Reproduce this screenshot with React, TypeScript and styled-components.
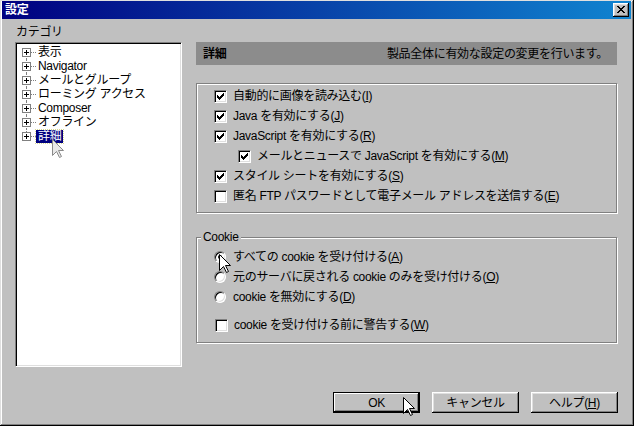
import styled, { createGlobalStyle } from 'styled-components'

const GlobalStyle = createGlobalStyle`
  html, body {
    margin: 0;
    padding: 0;
    background: #c0c0c0;
  }
  body {
    font-family: "Liberation Sans", "Noto Sans CJK JP", sans-serif;
    font-size: 12px;
    letter-spacing: -0.3px;
    color: #000;
  }
`

const Window = styled.div`
  position: relative;
  width: 634px;
  height: 426px;
  box-sizing: border-box;
  background: #c0c0c0;
  padding: 1px 3px 3px 2px;
  box-shadow: inset -1px -1px #000, inset 1px 1px #dfdfdf, inset -2px -2px #808080,
    inset 2px 2px #fff;
  display: flex;
  flex-direction: column;
`

const TitleBar = styled.div`
  height: 18px;
  flex: none;
  display: flex;
  align-items: center;
  justify-content: space-between;
  padding: 0 2px 0 3px;
  background: linear-gradient(90deg, #000080, #1084d0);
  color: #fff;
  font-weight: bold;
  line-height: 18px;
`

const CloseButton = styled.div`
  width: 16px;
  height: 14px;
  box-sizing: border-box;
  background: #c0c0c0;
  box-shadow: inset -1px -1px #000, inset 1px 1px #fff, inset -2px -2px #808080,
    inset 2px 2px #dfdfdf;
  display: flex;
  align-items: center;
  justify-content: center;
  padding: 0 1px 1px 0;
`

const Body = styled.div`
  flex: 1;
  display: flex;
  flex-direction: column;
  padding: 5px 13px 0 13px;
`

const Columns = styled.div`
  display: flex;
  gap: 14px;
  height: 343px;
`

const LeftColumn = styled.div`
  width: 167px;
  flex: none;
  display: flex;
  flex-direction: column;
`

const CategoryLabel = styled.div`
  height: 16px;
  line-height: 16px;
  margin-bottom: 2px;
  padding-left: 1px;
`

const Tree = styled.div`
  height: 325px;
  box-sizing: border-box;
  background: #fff;
  border: 1px solid;
  border-color: #808080 #fff #fff #808080;
  box-shadow: inset 1px 1px #000, inset -1px -1px #dfdfdf;
  padding: 2px 0 0 6px;
`

const TreeRow = styled.div<{ $first?: boolean; $last?: boolean }>`
  position: relative;
  height: 14px;
  display: flex;
  align-items: center;

  &::before {
    content: '';
    position: absolute;
    left: 4px;
    top: ${(p) => (p.$first ? '7px' : '0')};
    bottom: ${(p) => (p.$last ? '7px' : '0')};
    border-left: 1px dotted #808080;
  }
`

const Expander = styled.span`
  position: relative;
  z-index: 1;
  width: 9px;
  height: 9px;
  box-sizing: border-box;
  border: 1px solid #808080;
  background: #fff;
  flex: none;

  &::before {
    content: '';
    position: absolute;
    left: 1px;
    top: 3px;
    width: 5px;
    height: 1px;
    background: #000;
  }
  &::after {
    content: '';
    position: absolute;
    left: 3px;
    top: 1px;
    width: 1px;
    height: 5px;
    background: #000;
  }
`

const Connector = styled.span`
  width: 5px;
  flex: none;
  border-top: 1px dotted #808080;
`

const TreeLabel = styled.span<{ $selected?: boolean }>`
  display: inline-block;
  height: 13px;
  padding: 0 2px;
  line-height: 13px;
  white-space: nowrap;
  background: ${(p) => (p.$selected ? '#000080' : 'transparent')};
  color: ${(p) => (p.$selected ? '#fff' : '#000')};
  outline: ${(p) => (p.$selected ? '1px dotted #d8d890' : 'none')};
`

const RightColumn = styled.div`
  flex: 1;
  display: flex;
  flex-direction: column;
  padding-top: 18px;
`

const Header = styled.div`
  height: 23px;
  margin-right: 1px;
  flex: none;
  background: #8c8c8c;
  display: flex;
  align-items: center;
  justify-content: space-between;
  padding: 0 9px 0 7px;
  line-height: 14px;
`

const HeaderTitle = styled.span`
  font-weight: bold;
`

const Group = styled.fieldset<{ $gap: number }>`
  margin: ${(p) => p.$gap}px 1px 0 0;
  padding: 2px 0 6px 0;
  border: 1px solid #808080;
  box-shadow: inset 1px 1px #fff, 1px 1px 0 #fff;
  min-width: 0;
`

const Legend = styled.legend`
  margin-left: 4px;
  padding: 0 2px;
  line-height: 14px;
  background: #c0c0c0;
`

const OptionList = styled.div<{ $top: number; $bottom: number }>`
  display: flex;
  flex-direction: column;
  padding: ${(p) => p.$top}px 0 ${(p) => p.$bottom}px 17px;
`

const OptionRow = styled.div<{ $indent?: number; $space?: number }>`
  height: 20px;
  display: flex;
  align-items: center;
  gap: 6px;
  margin-left: ${(p) => p.$indent ?? 0}px;
  margin-top: ${(p) => p.$space ?? 0}px;
  line-height: 14px;
  white-space: nowrap;
`

const CheckBox = styled.span`
  width: 13px;
  height: 13px;
  box-sizing: border-box;
  flex: none;
  background: #fff;
  border: 1px solid;
  border-color: #808080 #fff #fff #808080;
  box-shadow: inset 1px 1px #000, inset -1px -1px #dfdfdf;
  display: flex;
  align-items: center;
  justify-content: center;
`

const RadioBox = styled.span<{ $on?: boolean }>`
  position: relative;
  width: 12px;
  height: 12px;
  box-sizing: border-box;
  flex: none;
  border-radius: 50%;
  background: #fff;
  border: 1px solid;
  border-color: #808080 #fff #fff #808080;
  box-shadow: inset 1px 1px #000, inset -1px -1px #dfdfdf;
  margin-right: 1px;

  &::after {
    content: '';
    display: ${(p) => (p.$on ? 'block' : 'none')};
    position: absolute;
    left: 3px;
    top: 3px;
    width: 4px;
    height: 4px;
    border-radius: 50%;
    background: #000;
  }
`

const Footer = styled.div`
  display: flex;
  justify-content: flex-end;
  gap: 12px;
  margin-top: 25px;
`

const Button = styled.div<{ $default?: boolean }>`
  width: 87px;
  height: 21px;
  box-sizing: border-box;
  background: #c0c0c0;
  display: flex;
  align-items: center;
  justify-content: center;
  line-height: 14px;
  box-shadow: ${(p) =>
    p.$default
      ? 'inset 0 0 0 1px #000, inset -2px -2px #000, inset 2px 2px #fff, inset -3px -3px #808080'
      : 'inset -1px -1px #000, inset 1px 1px #fff, inset -2px -2px #808080, inset 2px 2px #dfdfdf'};
`

const Pointer = styled.svg<{ $x: number; $y: number }>`
  position: absolute;
  left: ${(p) => p.$x}px;
  top: ${(p) => p.$y}px;
  z-index: 5;
`

const Check = () => (
  <svg width="7" height="7" viewBox="0 0 7 7">
    <path
      d="M0 2h1v3H0zM1 3h1v3H1zM2 4h1v3H2zM3 3h1v3H3zM4 2h1v3H4zM5 1h1v3H5zM6 0h1v3H6z"
      fill="#000"
    />
  </svg>
)

const CloseGlyph = () => (
  <svg width="8" height="7" viewBox="0 0 8 7">
    <path
      d="M0 0h2v1H0zM6 0h2v1H6zM1 1h2v1H1zM5 1h2v1H5zM2 2h4v1H2zM3 3h2v1H3zM2 4h4v1H2zM1 5h2v1H1zM5 5h2v1H5zM0 6h2v1H0zM6 6h2v1H6z"
      fill="#000"
    />
  </svg>
)

const Cursor = ({ x, y, ghost }: { x: number; y: number; ghost?: boolean }) => (
  <Pointer $x={x} $y={y} width="13" height="20" viewBox="0 0 13 20">
    <path
      d="M0.5 0.5V16.5L4.5 12.5L7.5 18.5L9.5 17.5L6.5 11.5H11.5Z"
      fill={ghost ? '#e8e8e8' : '#fff'}
      stroke={ghost ? '#8a8a8a' : '#000'}
      strokeWidth="1"
    />
  </Pointer>
)

const Key = ({ label, k }: { label: string; k: string }) => (
  <span>
    {label}(<u>{k}</u>)
  </span>
)

const categories = ['表示', 'Navigator', 'メールとグループ', 'ローミング アクセス', 'Composer', 'オフライン', '詳細']

const options = [
  { label: '自動的に画像を読み込む', k: 'I', checked: true, indent: 0 },
  { label: 'Java を有効にする', k: 'J', checked: true, indent: 0 },
  { label: 'JavaScript を有効にする', k: 'R', checked: true, indent: 0 },
  { label: 'メールとニュースで JavaScript を有効にする', k: 'M', checked: true, indent: 24 },
  { label: 'スタイル シートを有効にする', k: 'S', checked: true, indent: 0 },
  { label: '匿名 FTP パスワードとして電子メール アドレスを送信する', k: 'E', checked: false, indent: 0 },
]

const cookieChoices = [
  { label: 'すべての cookie を受け付ける', k: 'A', on: true },
  { label: '元のサーバに戻される cookie のみを受け付ける', k: 'O', on: false },
  { label: 'cookie を無効にする', k: 'D', on: false },
]

export default function App() {
  return (
    <>
      <GlobalStyle />
      <Window>
        <TitleBar>
          <span>設定</span>
          <CloseButton>
            <CloseGlyph />
          </CloseButton>
        </TitleBar>
        <Body>
          <Columns>
            <LeftColumn>
              <CategoryLabel>カテゴリ</CategoryLabel>
              <Tree>
                {categories.map((c, i) => (
                  <TreeRow key={c} $first={i === 0} $last={i === categories.length - 1}>
                    <Expander />
                    <Connector />
                    <TreeLabel $selected={i === categories.length - 1}>{c}</TreeLabel>
                  </TreeRow>
                ))}
              </Tree>
            </LeftColumn>
            <RightColumn>
              <Header>
                <HeaderTitle>詳細</HeaderTitle>
                <span>製品全体に有効な設定の変更を行います。</span>
              </Header>
              <Group $gap={18}>
                <OptionList $top={0} $bottom={0}>
                  {options.map((o) => (
                    <OptionRow key={o.k} $indent={o.indent}>
                      <CheckBox>{o.checked && <Check />}</CheckBox>
                      <Key label={o.label} k={o.k} />
                    </OptionRow>
                  ))}
                </OptionList>
              </Group>
              <Group $gap={17}>
                <Legend>Cookie</Legend>
                <OptionList $top={1} $bottom={1}>
                  {cookieChoices.map((c) => (
                    <OptionRow key={c.k}>
                      <RadioBox $on={c.on} />
                      <Key label={c.label} k={c.k} />
                    </OptionRow>
                  ))}
                  <OptionRow $space={8} $indent={1}>
                    <CheckBox />
                    <Key label="cookie を受け付ける前に警告する" k="W" />
                  </OptionRow>
                </OptionList>
              </Group>
            </RightColumn>
          </Columns>
          <Footer>
            <Button $default>OK</Button>
            <Button>キャンセル</Button>
            <Button>
              <Key label="ヘルプ" k="H" />
            </Button>
          </Footer>
        </Body>
        <Cursor x={52} y={139} ghost />
        <Cursor x={219} y={254} />
        <Cursor x={403} y={397} />
      </Window>
    </>
  )
}
